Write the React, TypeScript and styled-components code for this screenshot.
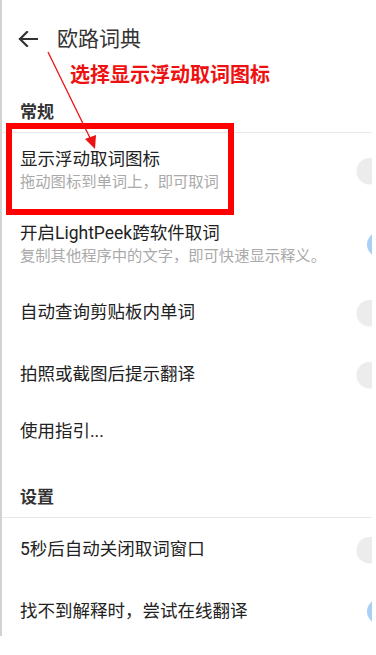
import React from "react";
import styled, { createGlobalStyle } from "styled-components";

const GlobalStyle = createGlobalStyle`
  html, body {
    margin: 0;
    padding: 0;
    background: #ffffff;
  }
  body {
    font-family: Roboto, "Noto Sans CJK SC", "Noto Sans", sans-serif;
  }
`

type Item = { id: number, title: string, sub?: string, toggle?: 'on' | 'off', h?: number }

const general: Item[] = [
    { id: 1, title: '显示浮动取词图标', sub: '拖动图标到单词上，即可取词', toggle: 'off' },
    { id: 2, title: '开启LightPeek跨软件取词', sub: '复制其他程序中的文字，即可快速显示释义。', toggle: 'on' },
    { id: 3, title: '自动查询剪贴板内单词', toggle: 'off' },
    { id: 4, title: '拍照或截图后提示翻译', toggle: 'off' },
    { id: 5, title: '使用指引...', h: 52 },
]

const settings: Item[] = [
    { id: 6, title: '5秒后自动关闭取词窗口', toggle: 'off' },
    { id: 7, title: '找不到解释时，尝试在线翻译', toggle: 'on' },
]

const App = () => {
    return <Page>
        <GlobalStyle/>
        <Screen>
            <Toolbar>
                <BackIcon/>
                <Title>欧路词典</Title>
            </Toolbar>

            <SectionHeader>常规</SectionHeader>
            { general.map(it=><SettingRow key={it.id} item={it}/>) }

            <SectionHeader>设置</SectionHeader>
            { settings.map(it=><SettingRow key={it.id} item={it}/>) }
        </Screen>

        {/* annotation layer drawn over the screenshot */}
        <NoteText>选择显示浮动取词图标</NoteText>
        <NoteBox/>
        <NoteArrow viewBox="0 0 376 655">
            <line x1="48" y1="52" x2="91" y2="140" stroke="#ee1111" strokeWidth="1.3"/>
            <polygon points="95,149 85,139 96,135" fill="#ee1111"/>
        </NoteArrow>
    </Page>
}
export default App


const BackIcon = () =>
    <BackSvg viewBox="0 0 20 16">
        <path d="M19 8H2 M9 1L2 8l7 7" fill="none" stroke="#333" strokeWidth="2.2" strokeLinecap="square"/>
    </BackSvg>


type SettingRowProps = { item: Item }
const SettingRow = ({ item }: SettingRowProps) => {
    return <Row $h={item.h ?? (item.sub ? 74 : 62)}>
        <Texts>
            <RowTitle>{item.title}</RowTitle>
            { item.sub && <RowSub>{item.sub}</RowSub> }
        </Texts>
        { item.toggle && <Switch><Thumb $on={item.toggle==='on'}/></Switch> }
    </Row>
}


const Page = styled.div`
  position: relative;
  width: 376px;
  height: 655px;
  overflow: hidden;
  background: #fff;
`

const Screen = styled.div`
  width: 372px;
  height: 636px;
  box-sizing: border-box;
  border-left: 2px solid #d2d2d2;
  overflow: hidden;
  display: flex;
  flex-direction: column;
`

const Toolbar = styled.div`
  height: 72px;
  flex: none;
  display: flex;
  align-items: center;
  padding-left: 16px;
  padding-top: 6px;
  box-sizing: border-box;
  gap: 19px;
`

const BackSvg = styled.svg`
  width: 20px;
  height: 16px;
`

const Title = styled.div`
  font-size: 21px;
  line-height: 28px;
  color: #333;
`

const SectionHeader = styled.div`
  flex: none;
  padding: 28px 0 8px 18px;
  font-size: 17px;
  line-height: 24px;
  font-weight: 700;
  color: #333;
  border-bottom: 1px solid #e8e8e8;
`

const Row = styled.div<{ $h: number }>`
  flex: none;
  height: ${p=>p.$h}px;
  display: flex;
  align-items: center;
  justify-content: space-between;
  padding-left: 18px;
  box-sizing: border-box;
`

const Texts = styled.div`
  display: flex;
  flex-direction: column;
`

const RowTitle = styled.div`
  font-size: 17.5px;
  line-height: 24px;
  color: #222;
`

const RowSub = styled.div`
  font-size: 15.3px;
  line-height: 22px;
  color: #aaa;
`

const Switch = styled.div`
  flex: none;
  width: 40px;
  height: 25px;
  margin-right: -25px;
  display: flex;
  align-items: center;
`

const Thumb = styled.div<{ $on: boolean }>`
  width: 25px;
  height: 25px;
  border-radius: 50%;
  margin-left: ${p=>p.$on ? 10 : 0}px;
  background: ${p=>p.$on ? '#a9cff4' : '#ececec'};
  box-shadow: ${p=>p.$on ? 'none' : '0 1px 2px rgba(0,0,0,0.12)'};
`

const NoteText = styled.div`
  position: absolute;
  left: 70px;
  top: 63px;
  font-size: 20px;
  line-height: 24px;
  font-weight: 700;
  color: #ee1111;
  white-space: nowrap;
`

const NoteBox = styled.div`
  position: absolute;
  left: 6px;
  top: 123px;
  width: 228px;
  height: 92px;
  box-sizing: border-box;
  border: 6px solid #f00;
`

const NoteArrow = styled.svg`
  position: absolute;
  left: 0;
  top: 0;
  width: 376px;
  height: 655px;
  pointer-events: none;
`
